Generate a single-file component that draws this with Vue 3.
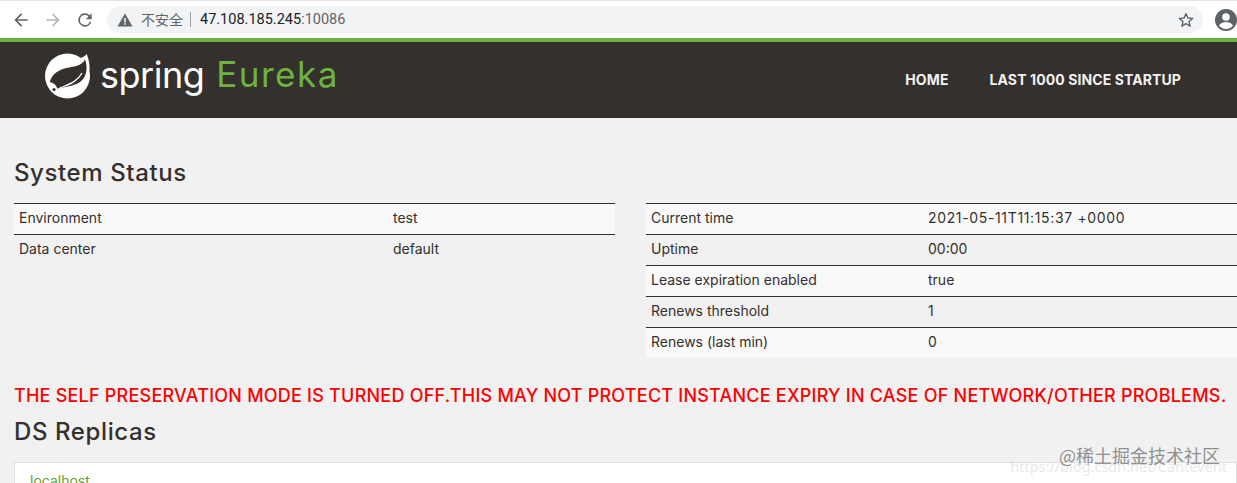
<script setup>
const leftRows = [
  ['Environment', 'test'],
  ['Data center', 'default'],
]
const rightRows = [
  ['Current time', '2021-05-11T11:15:37 +0000'],
  ['Uptime', '00:00'],
  ['Lease expiration enabled', 'true'],
  ['Renews threshold', '1'],
  ['Renews (last min)', '0'],
]
</script>

<template>
  <div class="page">
    <div class="chrome">
      <svg class="tool" viewBox="0 0 24 24" width="20" height="20"><path d="M20 11H7.800l5.600-5.600L12 4l-8 8 8 8 1.400-1.400L7.800 13H20z" fill="#5f6368" /></svg>
      <svg class="tool" viewBox="0 0 24 24" width="20" height="20"><path d="M4 11h12.200l-5.600-5.600L12 4l8 8-8 8-1.400-1.400 5.600-5.600H4z" fill="#b4b6b9" /></svg>
      <svg class="tool" viewBox="0 0 24 24" width="20" height="20"><path d="M17.650 6.350A8 8 0 1 0 19.730 14h-2.080A6 6 0 1 1 12 6c1.660 0 3.140.690 4.220 1.780L13 11h7V4z" fill="#5f6368" /></svg>
      <div class="omnibox">
        <svg class="warn" viewBox="0 0 16 16" width="16" height="16"><path d="M8 1.500 15.500 14.500H.500z" fill="#5f6368" /><rect x="7.200" y="6" width="1.600" height="4.500" fill="#f1f3f4" /><rect x="7.200" y="11.200" width="1.600" height="1.600" fill="#f1f3f4" /></svg>
        <span class="insecure">不安全</span>
        <span class="sep"></span>
        <span class="url">47.108.185.245<span class="port">:10086</span></span>
        <svg class="star" viewBox="0 0 24 24" width="18" height="18"><path d="M12 3.500l2.500 5.800 6.300.600-4.800 4.100 1.500 6.200L12 16.900l-5.500 3.300L8 14 3.200 9.900l6.300-.600z" fill="none" stroke="#5f6368" stroke-width="1.800" stroke-linejoin="round" /></svg>
      </div>
      <svg class="avatar" viewBox="0 0 24 24" width="24" height="24"><circle cx="12" cy="12" r="11" fill="#5f6368" /><circle cx="12" cy="9" r="3.800" fill="#fff" /><path d="M5 17.500c1.800-2.600 4.500-3.400 7-3.400s5.200.800 7 3.400A9 9 0 0 1 12 21a9 9 0 0 1-7-3.500z" fill="#fff" /></svg>
    </div>

    <nav class="navbar">
      <div class="brand">
        <svg class="logo" viewBox="0 0 46 46" width="46" height="46">
          <circle cx="22.500" cy="23" r="22.500" fill="#fff" />
          <path d="M35 5C38 4.500 40 3 41.700 1 44 7 45 12 44.500 18L40 20z" fill="#fff" />
          <path d="M4.700 29C7 21 14 16 24 14.500 31 13.500 37 12 40 6.500 43 14 42 24 35 29 29 33.500 20 33 12.500 36.500 11.500 32 9 30 4.700 29z" fill="#34302d" />
          <path d="M12 36.500C20 32 31 31 37 20" fill="none" stroke="#fff" stroke-width="1.300" />
          <circle cx="9" cy="36.500" r="1.600" fill="#34302d" />
        </svg>
        <span class="spring">spring</span>
        <span class="eureka">Eureka</span>
      </div>
      <div class="links">
        <a>HOME</a>
        <a>LAST 1000 SINCE STARTUP</a>
      </div>
    </nav>

    <main class="content">
      <h2 class="status-title">System Status</h2>
      <div class="tables">
        <table class="left">
          <tr v-for="r in leftRows" :key="r[0]">
            <td class="name">{{ r[0] }}</td>
            <td>{{ r[1] }}</td>
          </tr>
        </table>
        <table class="right">
          <tr v-for="r in rightRows" :key="r[0]">
            <td class="name">{{ r[0] }}</td>
            <td>{{ r[1] }}</td>
          </tr>
        </table>
      </div>
      <h4 class="error">THE SELF PRESERVATION MODE IS TURNED OFF.THIS MAY NOT PROTECT INSTANCE EXPIRY IN CASE OF NETWORK/OTHER PROBLEMS.</h4>
      <h2 class="replica-title">DS Replicas</h2>
      <div class="card"><a>localhost</a></div>
    </main>

    <div class="mark-csdn">https://blog.csdn.net/Cantevent</div>
    <div class="mark-juejin">@稀土掘金技术社区</div>
  </div>
</template>

<style>
html, body {
  margin: 0;
  overflow: hidden;
}
</style>

<style scoped>
.page {
  position: relative;
  width: 1237px;
  height: 483px;
  overflow: hidden;
  background: #f1f1f1;
  font-family: "Inter", "Noto Sans", sans-serif;
  color: #34302d;
}

.chrome {
  height: 37px;
  background: #fff;
  border-top: 1px solid #e4e4e4;
  display: flex;
  align-items: center;
  padding-left: 11px;
}

.tool {
  margin-right: 12px;
}

.omnibox {
  flex: 1;
  height: 27px;
  background: #f1f3f4;
  border-radius: 14px;
  display: flex;
  align-items: center;
  padding-left: 10px;
  padding-right: 8px;
}

.warn {
  margin-right: 8px;
}

.insecure {
  font-family: "Noto Sans CJK SC", sans-serif;
  font-size: 14px;
  color: #5f6368;
  margin-bottom: 2px;
}

.sep {
  width: 1px;
  height: 15px;
  background: #9a9da1;
  margin: 0 9px 0 7px;
}

.url {
  font-family: "Roboto", sans-serif;
  font-size: 14.500px;
  color: #202124;
  flex: 1;
}

.port {
  color: #5f6368;
}

.avatar {
  margin: 0 -1px 0 11px;
  flex: none;
}

.navbar {
  height: 76px;
  background: #34302d;
  border-top: 4px solid #6db33f;
  display: flex;
  justify-content: space-between;
  padding: 0 56px 0 45px;
}

.brand {
  display: flex;
  align-items: center;
  height: 68px;
}

.logo {
  margin-right: 9px;
}

.spring {
  font-size: 36px;
  font-weight: 400;
  letter-spacing: -0.5px;
  color: #fff;
  margin-right: 12px;
  line-height: 1;
  margin-top: -2px;
}

.eureka {
  font-size: 35px;
  font-weight: 400;
  letter-spacing: 1.500px;
  color: #6db33f;
  line-height: 1;
  margin-top: -3px;
}

.links {
  display: flex;
  align-items: center;
  gap: 41px;
  height: 74px;
}

.links a {
  font-weight: 700;
  font-size: 14px;
  letter-spacing: 0.1px;
  color: #f1f1f1;
}

.content {
  padding: 0 0 0 14px;
}

.status-title {
  margin: 41px 0 16px;
  font-size: 24px;
  font-weight: 500;
  letter-spacing: 0.6px;
  line-height: 28px;
}

.tables {
  display: flex;
  gap: 31px;
  height: 157px;
}

table {
  border-collapse: separate;
  border-spacing: 0;
  font-size: 14px;
  align-self: flex-start;
}

.left {
  width: 601px;
}

.right {
  width: 591px;
}

td {
  height: 31px;
  padding: 0 5px 3px;
  border-top: 1px solid #34302d;
  box-sizing: border-box;
}

.left .name {
  width: 374px;
}

.right .name {
  width: 277px;
}

.right tr:first-child td:last-child {
  letter-spacing: 0.65px;
}

tr:nth-child(odd) td {
  background: #f9f9f9;
}

.error {
  margin: 25px 0 0;
  font-size: 18px;
  font-weight: 500;
  letter-spacing: 0.22px;
  line-height: 22px;
  color: #f00;
  white-space: nowrap;
}

.replica-title {
  margin: 11px 0 0;
  font-size: 24px;
  font-weight: 500;
  letter-spacing: 0.6px;
  line-height: 28px;
}

.card {
  margin-top: 16px;
  height: 60px;
  background: #fff;
  border: 1px solid #ddd;
  padding: 9px 15px;
  font-size: 14px;
}

.card a {
  color: #5fa134;
}

.mark-csdn {
  position: absolute;
  right: 10px;
  top: 456px;
  font-family: "Noto Sans", sans-serif;
  font-size: 14.500px;
  color: rgba(225, 225, 225, 0.75);
}

.mark-juejin {
  position: absolute;
  right: 17px;
  top: 442px;
  font-family: "Noto Sans CJK SC", sans-serif;
  font-size: 18px;
  color: rgba(110, 110, 110, 0.75);
}
</style>
